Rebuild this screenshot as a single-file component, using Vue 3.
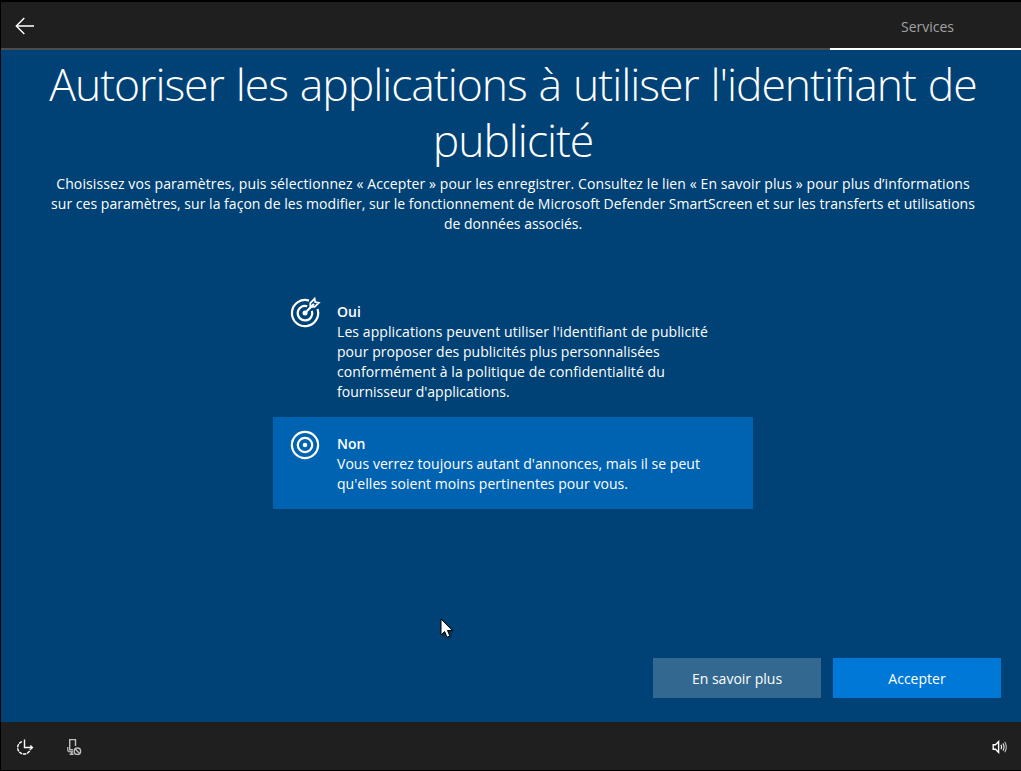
<script setup>
import { ref } from 'vue'

const selected = ref('non')

const titleLines = [
  { text: "Autoriser les applications à utiliser l'identifiant de", cls: 't1' },
  { text: 'publicité', cls: 't2' },
]
const introLines = [
  { text: 'Choisissez vos paramètres, puis sélectionnez « Accepter » pour les enregistrer. Consultez le lien « En savoir plus » pour plus d’informations', cls: 'i1' },
  { text: 'sur ces paramètres, sur la façon de les modifier, sur le fonctionnement de Microsoft Defender SmartScreen et sur les transferts et utilisations', cls: 'i2' },
  { text: 'de données associés.', cls: 'i3' },
]
const options = [
  {
    id: 'oui',
    title: 'Oui',
    lines: [
      "Les applications peuvent utiliser l'identifiant de publicité",
      'pour proposer des publicités plus personnalisées',
      'conformément à la politique de confidentialité du',
      "fournisseur d'applications.",
    ],
  },
  {
    id: 'non',
    title: 'Non',
    lines: [
      "Vous verrez toujours autant d'annonces, mais il se peut",
      "qu'elles soient moins pertinentes pour vous.",
    ],
  },
]
</script>

<template>
  <div class="screen">
    <header class="topbar">
      <button class="back" aria-label="Retour">
        <svg width="20" height="18" viewBox="0 0 20 18" fill="none" stroke="#fff" stroke-width="1.4">
          <path d="M1.2 9H19" stroke="#ddd" stroke-width="1.8" />
          <path d="M9.3 1L1.3 9l8 8" />
        </svg>
      </button>
      <div class="tab">Services</div>
    </header>

    <main class="content">
      <h1 class="title">
        <span v-for="l in titleLines" :key="l.cls" :class="['line', l.cls]">{{ l.text }}</span>
      </h1>
      <p class="intro">
        <span v-for="l in introLines" :key="l.cls" :class="['line', l.cls]">{{ l.text }}</span>
      </p>

      <div class="options">
        <div
          v-for="o in options"
          :key="o.id"
          :class="['option', o.id, { selected: selected === o.id }]"
          @click="selected = o.id"
        >
          <svg v-if="o.id === 'oui'" class="icon" width="34" height="34" viewBox="0 0 34 34" fill="none" stroke="#fff" stroke-width="2.2">
            <path d="M20 5.6A13.1 13.1 0 1 0 28.5 14" />
            <path d="M18.2 11.2A7.3 7.3 0 1 0 22.9 15.8" />
            <path d="M16.2 17.8L25 9" />
            <path d="M21.3 11.8V8L25.6 3.7L26.2 7.1L29.8 7.8L25.6 11.8Z" stroke-width="1.8" />
            <circle cx="16" cy="18" r="2.5" fill="#fff" stroke="none" />
          </svg>
          <svg v-else class="icon" width="34" height="34" viewBox="0 0 34 34" fill="none" stroke="#fff" stroke-width="2.2">
            <circle cx="16" cy="18" r="13.1" />
            <circle cx="16" cy="18" r="7.2" />
            <circle cx="16" cy="18" r="2.3" fill="#fff" stroke="none" />
          </svg>
          <div class="text">
            <div class="name">{{ o.title }}</div>
            <div v-for="(l, i) in o.lines" :key="i" :class="['line', 'd' + i]">{{ l }}</div>
          </div>
        </div>
      </div>

      <div class="actions">
        <button class="btn more">En savoir plus</button>
        <button class="btn accept">Accepter</button>
      </div>
    </main>

    <footer class="bottombar">
      <svg class="ease" width="18" height="18" viewBox="0 0 18 18" fill="none" stroke="#fff" stroke-width="1.4">
        <path d="M6 3.6A6.4 6.4 0 1 0 14.2 11.4" stroke-dasharray="3.4 0.8" />
        <path d="M8.5 1.5V9.5H16" />
        <path d="M14.3 7.5L16.4 9.5L14.3 11.5" />
      </svg>
      <svg class="mic" width="17" height="18" viewBox="0 0 17 18" fill="none" stroke="#c0c0c0" stroke-width="1.4">
        <path d="M7 11.7H3.7V1.6H9.5V8" />
        <path d="M1.7 9V11.6Q1.7 13.8 4 13.8H7" stroke="#aaa" />
        <path d="M5.8 13.8V16.3M3.6 16.3H7.6" />
        <circle cx="11.4" cy="13.2" r="3.2" />
        <path d="M9.2 11L13.6 15.4" />
      </svg>
      <svg class="volume" width="16" height="14" viewBox="0 0 16 14" fill="none" stroke="#fff" stroke-width="1.4">
        <path d="M1.2 4.7H3.5L6.6 1.6V12.4L3.5 9.3H1.2Z" />
        <path d="M9 4.8Q10.3 7 9 9.2" stroke-width="1.2" />
        <path d="M10.9 3.4Q13.2 7 10.9 10.6" stroke="#ddd" stroke-width="1.2" />
        <path d="M12.7 1.8Q16 7 12.7 12.2" stroke="#bbb" stroke-width="1.1" />
      </svg>
    </footer>

    <svg class="cursor" width="16" height="22" viewBox="0 0 16 22">
      <path d="M1 1V17L4.6 13.6L7 19.2L9.9 18L7.5 12.5H12.4Z" fill="#fff" stroke="#000" stroke-width="1" />
    </svg>
  </div>
</template>

<style>
body {
  margin: 0;
  background: #000;
}
</style>

<style scoped>
.screen {
  position: relative;
  box-sizing: border-box;
  width: 1021px;
  height: 771px;
  padding: 2px 0 1px 1px;
  background: #000;
  color: #fff;
  font: 14px/20px "Open Sans", "Noto Sans", sans-serif;
  display: flex;
  flex-direction: column;
  overflow: hidden;
}
button {
  border: 0;
  padding: 0;
  font: inherit;
  color: inherit;
}
.topbar {
  height: 48px;
  flex: none;
  display: flex;
  justify-content: space-between;
  background: linear-gradient(#4c4c4c, #4c4c4c) bottom / 100% 2px no-repeat #1f1f1f;
}
.back {
  width: 48px;
  background: none;
  display: flex;
  align-items: center;
  justify-content: center;
}
.tab {
  box-sizing: border-box;
  width: 191px;
  height: 48px;
  padding-left: 4px;
  border-bottom: 2px solid #fff;
  text-align: center;
  line-height: 49px;
  color: #a2a2a2;
}
.content {
  flex: 1;
  display: flex;
  flex-direction: column;
  background: #004275;
}
.title {
  margin: 6px 0 0;
  padding-left: 4px;
  font-size: 44.5px;
  line-height: 56px;
  font-weight: 300;
  letter-spacing: -1.04px;
  word-spacing: 1.4px;
  text-align: center;
}
.line {
  display: block;
  white-space: nowrap;
}
.intro {
  margin: 6px 0 0;
  padding-left: 4px;
  text-align: center;
}
.i1 {
  letter-spacing: 0.1px;
}
.i2 {
  letter-spacing: 0.03px;
}
.options {
  width: 480px;
  margin: 51px 0 0 272px;
}
.option {
  box-sizing: border-box;
  display: flex;
  padding: 17px 16px 15px;
}
.option.selected {
  background: #0063b1;
}
.oui .d0 {
  letter-spacing: 0.085px;
}
.oui .d1 {
  letter-spacing: 0.04px;
}
.oui .d2 {
  letter-spacing: 0.1px;
}
.non .line {
  letter-spacing: 0.045px;
}
.icon {
  flex: none;
  margin: -7px 14px 0 0;
}
.name {
  font-weight: 600;
}
.actions {
  margin-top: auto;
  padding: 0 20px 24px;
  display: flex;
  justify-content: flex-end;
  gap: 12px;
}
.btn {
  width: 168px;
  height: 40px;
  padding-top: 2px;
}
.more {
  background: #336891;
}
.accept {
  background: #0078d7;
}
.bottombar {
  box-sizing: border-box;
  height: 48px;
  flex: none;
  display: flex;
  align-items: center;
  padding-top: 2px;
  background: #1f1f1f;
}
.ease {
  margin-left: 15px;
}
.mic {
  margin-left: 32px;
}
.volume {
  margin: 0 13px 0 auto;
}
.cursor {
  position: absolute;
  left: 440px;
  top: 618px;
  filter: drop-shadow(1px 1px 1px rgba(0, 0, 0, 0.4));
}
</style>
